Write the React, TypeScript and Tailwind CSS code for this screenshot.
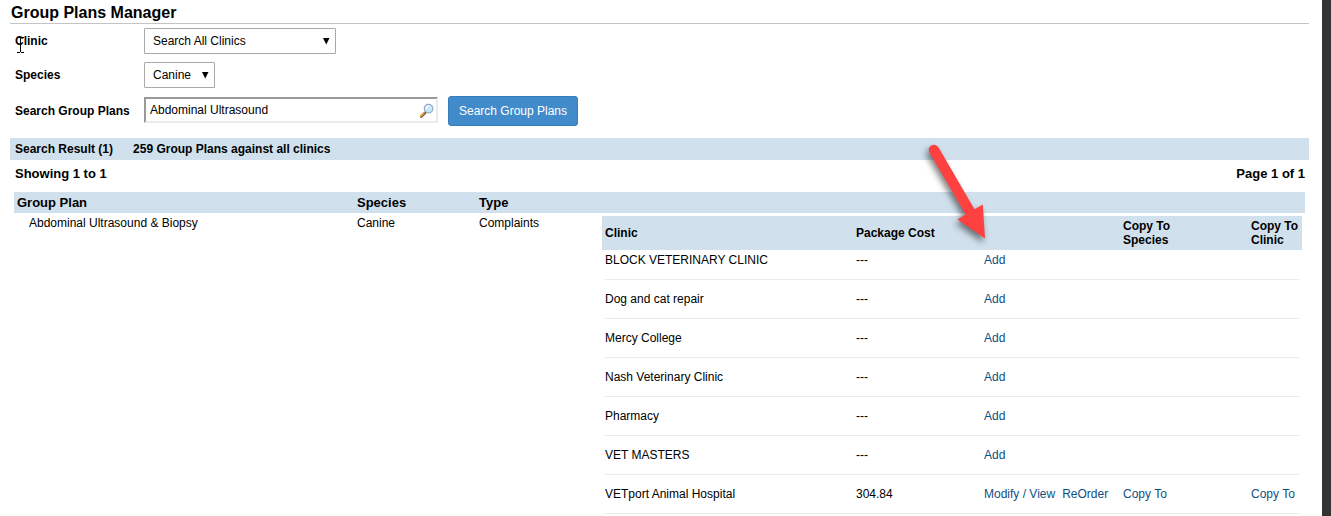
const clinics = [
  { id: 1, name: 'BLOCK VETERINARY CLINIC', cost: '---', added: false },
  { id: 2, name: 'Dog and cat repair', cost: '---', added: false },
  { id: 3, name: 'Mercy College', cost: '---', added: false },
  { id: 4, name: 'Nash Veterinary Clinic', cost: '---', added: false },
  { id: 5, name: 'Pharmacy', cost: '---', added: false },
  { id: 6, name: 'VET MASTERS', cost: '---', added: false },
  { id: 7, name: 'VETport Animal Hospital', cost: '304.84', added: true },
];

function SelectBox({ id, options, className }: { id: string; options: string[]; className: string }) {
  return (
    <div className={`relative ${className}`}>
      <select id={id} className="h-[26px] w-full appearance-none rounded-[1px] border border-[#a9a9a9] bg-white pl-2 text-black">
        {options.map((option) => (
          <option key={option}>{option}</option>
        ))}
      </select>
      <svg className="pointer-events-none absolute top-[10px] right-[6px] h-[7px] w-[7px]" viewBox="0 0 7 7" aria-hidden="true">
        <path d="M0 0h6.5L3.25 6.5z" fill="#000" />
      </svg>
    </div>
  );
}

function SearchIcon() {
  return (
    <svg className="size-4" viewBox="0 0 16 16" aria-hidden="true">
      <path d="M2.2 13.6 6.3 9.6" stroke="#5f5348" strokeWidth="2.6" strokeLinecap="round" />
      <path d="M1.8 13 5 9.9" stroke="#f09a35" strokeWidth="1.8" strokeLinecap="round" />
      <circle cx="9.6" cy="5.6" r="4.3" fill="#c5e8fb" stroke="#93a9c4" strokeWidth="1.2" />
      <path d="M7.2 6a3 3 0 0 1 3-3" fill="none" stroke="#fff" strokeWidth="1.5" />
    </svg>
  );
}

function Pointer() {
  return (
    <svg className="pointer-events-none absolute top-[138px] left-[920px] h-[112px] w-[80px] drop-shadow-[-2px_4px_3px_rgba(0,0,0,0.5)]" viewBox="0 0 80 112" aria-hidden="true">
      <path d="M9.4 14.6A5.2 5.2 0 0 1 18.6 9.4L54.5 71.2 62.8 66.5 65 100.5 37.5 81.5 45.7 76.6Z" fill="#fd4141" />
    </svg>
  );
}

function TextCursor() {
  return (
    <svg className="pointer-events-none absolute top-[37px] left-[17px] h-[16px] w-[7px]" viewBox="0 0 7 16" aria-hidden="true">
      <path d="M0 .5H3M4 .5h3M3.5 1v14M0 15.5H3M4 15.5h3" fill="none" stroke="#000" />
    </svg>
  );
}

export default function App() {
  return (
    <div className="relative h-screen overflow-hidden border-r-[9px] border-[#333] bg-white pr-[13px] pl-[10px] font-['Liberation_Sans',Arial,sans-serif] text-[12px] leading-[14px] text-black">
      <h1 className="h-[24px] border-b border-[#c4c4c4] pt-1 pl-px text-[16px] leading-[18px] font-bold">Group Plans Manager</h1>

      <form className="pt-1 pl-[5px]" onSubmit={(e) => e.preventDefault()}>
        <div className="mb-2 flex items-center">
          <label htmlFor="clinic" className="w-[129px] font-bold">Clinic</label>
          <SelectBox id="clinic" options={['Search All Clinics']} className="w-[192px]" />
        </div>
        <div className="mb-2 flex items-center">
          <label htmlFor="species" className="w-[129px] font-bold">Species</label>
          <SelectBox id="species" options={['Canine', 'Feline']} className="w-[71px]" />
        </div>
        <div className="flex items-center">
          <label htmlFor="search" className="w-[129px] font-bold">Search Group Plans</label>
          <div className="relative mr-[10px] mb-[2px] w-[294px]">
            <input
              id="search"
              type="text"
              defaultValue="Abdominal Ultrasound"
              className="block h-[26px] w-full border-2 border-[#ebebeb] border-t-[#999] border-l-[#999] bg-white pr-6 pl-1"
            />
            <div className="absolute top-[6px] right-[3px]">
              <SearchIcon />
            </div>
          </div>
          <button type="submit" className="h-[30px] w-[130px] rounded-[3px] border border-[#357ebd] bg-[#428bca] text-white">
            Search Group Plans
          </button>
        </div>
      </form>

      <div className="mt-3 flex h-[22px] items-center gap-5 bg-[#d0e0ec] pl-[5px] font-bold">
        <span>Search Result (1)</span>
        <span>259 Group Plans against all clinics</span>
      </div>
      <div className="flex h-[32px] items-center justify-between pr-1 pb-[5px] pl-[5px] text-[13px] font-bold">
        <span>Showing 1 to 1</span>
        <span>Page 1 of 1</span>
      </div>

      <div className="pr-1 pl-1">
        <table className="w-full table-fixed text-left">
          <thead>
            <tr className="h-[21px] bg-[#d0e0ec] text-[13px]">
              <th className="w-[340px] pl-[3px]">Group Plan</th>
              <th className="w-[122px] pl-[3px]">Species</th>
              <th className="w-[126px] pl-[3px]">Type</th>
              <th aria-label="Clinics"></th>
            </tr>
          </thead>
          <tbody>
            <tr className="align-top">
              <td className="pt-[3px] pl-[15px]">Abdominal Ultrasound &amp; Biopsy</td>
              <td className="pt-[3px] pl-[3px]">Canine</td>
              <td className="pt-[3px] pl-[3px]">Complaints</td>
              <td className="pt-[3px] pr-[6px] pl-[3px]">
                <table className="w-full table-fixed">
                  <thead>
                    <tr className="h-[34px] bg-[#d0e0ec]">
                      <th className="w-[251px] shadow-[-3px_0_0_#d0e0ec]">Clinic</th>
                      <th className="w-[128px]">Package Cost</th>
                      <th aria-label="Actions"></th>
                      <th className="w-[128px] pr-[70px]">Copy To Species</th>
                      <th className="w-[48px] shadow-[3px_0_0_#d0e0ec]">Copy To Clinic</th>
                    </tr>
                  </thead>
                  <tbody>
                    {clinics.map((clinic, index) => (
                      <tr key={clinic.id} className={`border-b border-[#ebebeb] ${index === 0 ? 'h-[29px] align-top' : 'h-[39px]'}`}>
                        <td className={index === 0 ? 'pt-[3px]' : ''}>{clinic.name}</td>
                        <td className={index === 0 ? 'pt-[3px]' : ''}>{clinic.cost}</td>
                        <td className={`whitespace-nowrap text-[#0f4f82] ${index === 0 ? 'pt-[3px]' : ''}`}>
                          {clinic.added ? (
                            <>
                              <a href="#modify" className="mr-[7px]">Modify / View</a>
                              <a href="#reorder">ReOrder</a>
                            </>
                          ) : (
                            <a href="#add">Add</a>
                          )}
                        </td>
                        <td className="text-[#0f4f82]">{clinic.added && <a href="#copy-species">Copy To</a>}</td>
                        <td className="whitespace-nowrap text-[#0f4f82]">{clinic.added && <a href="#copy-clinic">Copy To</a>}</td>
                      </tr>
                    ))}
                  </tbody>
                </table>
              </td>
            </tr>
          </tbody>
        </table>
      </div>

      <TextCursor />
      <Pointer />
    </div>
  );
}
